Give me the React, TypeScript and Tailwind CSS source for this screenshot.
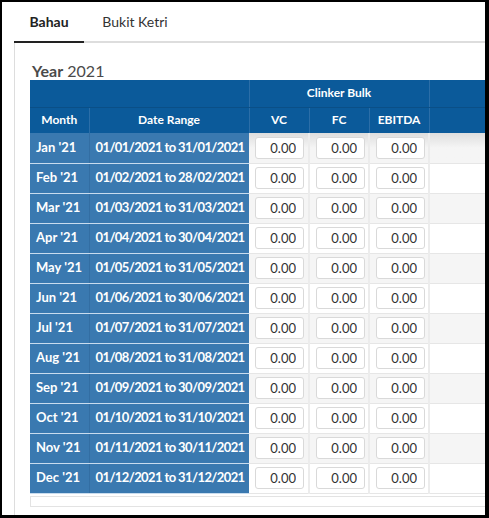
const months = ["Jan", "Feb", "Mar", "Apr", "May", "Jun", "Jul", "Aug", "Sep", "Oct", "Nov", "Dec"];
const lastDay = [31, 28, 31, 30, 31, 30, 31, 31, 30, 31, 30, 31];

const rows = months.map((m, i) => {
  const mm = String(i + 1).padStart(2, "0");
  return { label: `${m} '21`, range: `01/${mm}/2021 to ${lastDay[i]}/${mm}/2021` };
});

function NumInput() {
  return (
    <input
      readOnly
      value="0.00"
      className="w-[49px] h-[22px] rounded-[3px] border border-[#d9d9d9] bg-white pr-[7px] text-right text-[13px] text-[#333] outline-none"
    />
  );
}

export default function App() {
  return (
    <div className="w-[489px] h-[518px] bg-black pt-[2px] pl-[2px] pr-[4px] pb-[3px] overflow-hidden" style={{ fontFamily: "Lato, 'Open Sans', sans-serif" }}>
      <div className="h-full bg-white overflow-hidden flex flex-col">
        {/* tabs */}
        <div className="flex ml-[12px] h-[41px] border-b-2 border-[#dddddd] shrink-0">
          <div className="w-[70px] flex items-center justify-center text-[14px] font-bold text-[#222] border-b-2 border-[#222] -mb-[2px]">Bahau</div>
          <div className="w-[102px] flex items-center justify-center text-[14px] text-[#333]">Bukit Ketri</div>
        </div>

        <div className="ml-[12px] border-l border-[#dddddd] flex-1 pl-[15px] pt-[19px] overflow-hidden">
          <div className="text-[16px] leading-[18px] text-[#4a4a4a] ml-[2px]">
            <span className="font-bold">Year</span> 2021
          </div>

          <table className="border-collapse table-fixed w-[560px] text-[12px]">
            <colgroup>
              <col className="w-[59px]" />
              <col className="w-[160px]" />
              <col className="w-[60px]" />
              <col className="w-[60px]" />
              <col className="w-[60px]" />
              <col className="w-[161px]" />
            </colgroup>
            <thead>
              <tr className="h-[27px] bg-[#0b5a9a] text-white font-bold">
                <th colSpan={2} className="border-r border-[#2b6ea8] border-b border-b-[#0a4f87]"></th>
                <th colSpan={3} className="text-center border-r border-[#2b6ea8] border-b border-b-[#0a4f87]">Clinker Bulk</th>
                <th className="border-b border-b-[#0a4f87]"></th>
              </tr>
              <tr className="h-[26px] bg-[#0b5a9a] text-white font-bold">
                <th className="text-center border-r border-[#2b6ea8]">Month</th>
                <th className="text-center border-r border-[#2b6ea8]">Date Range</th>
                <th className="text-center border-r border-[#2b6ea8]">VC</th>
                <th className="text-center border-r border-[#2b6ea8]">FC</th>
                <th className="text-center border-r border-[#2b6ea8]">EBITDA</th>
                <th></th>
              </tr>
            </thead>
            <tbody>
              {rows.map((r, i) => {
                const odd = i % 2 === 0;
                const right = odd ? "bg-[#f5f5f5]" : "bg-white";
                const shade = i === 0 ? "bg-gradient-to-b from-[#dedede] to-[#f5f5f5] to-50%" : right;
                return (
                  <tr key={r.label} className="h-[30px]">
                    <td className="bg-[#3a79b0] text-white font-bold text-[13px] pl-[6px] border-b border-[#c9dcee] border-r border-r-[#336ea3] whitespace-nowrap">{r.label}</td>
                    <td className="bg-[#3a79b0] text-white font-bold text-[13px] tracking-[-0.6px] pl-[6px] border-b border-[#c9dcee] whitespace-nowrap">{r.range}</td>
                    <td className={`${shade} border-b border-[#e6e6e6] border-r-2 border-r-[#ececec] pl-[6px]`}><NumInput /></td>
                    <td className={`${shade} border-b border-[#e6e6e6] border-r-2 border-r-[#ececec] pl-[6px]`}><NumInput /></td>
                    <td className={`${shade} border-b border-[#e6e6e6] border-r-2 border-r-[#ececec] pl-[6px]`}><NumInput /></td>
                    <td className={`${shade} border-b border-[#e6e6e6]`}></td>
                  </tr>
                );
              })}
            </tbody>
          </table>
          <div className="w-[560px] h-[11px] mt-[2px] border border-[#e3e3e3] border-r-0"></div>
        </div>
      </div>
    </div>
  );
}
